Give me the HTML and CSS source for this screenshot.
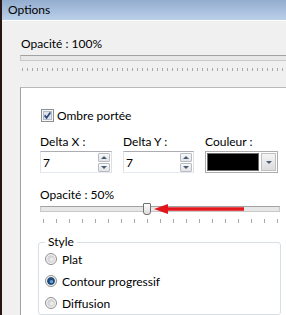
FILE: index.html
```html
<!DOCTYPE html>
<html lang="fr">

<head>
    <meta charset="UTF-8">
    <title>Options</title>
    <link rel="stylesheet" href="styles.css">
</head>

<body>
    <div class="window">
        <div class="titlebar">Options</div>

        <div class="content">
            <!-- Global opacity -->
            <div class="global-opacity">
                <div class="label">Opacité : 100%</div>
                <div class="track track-wide"></div>
                <div class="ticks-dense"></div>
            </div>

            <!-- Drop shadow panel -->
            <div class="panel">
                <label class="check-row">
                    <span class="checkbox">
                        <svg width="13" height="13" viewBox="0 0 13 13">
                            <rect x="0.5" y="0.5" width="12" height="12" fill="#f4f6f8" stroke="#8e8f8f"/>
                            <rect x="2.5" y="2.5" width="8" height="8" fill="#dce3ec" stroke="#b3bdc9"/>
                            <path d="M3.6 6.4 L5.6 8.8 L9.4 3.6" fill="none" stroke="#31477a" stroke-width="1.7"/>
                        </svg>
                    </span>
                    Ombre portée
                </label>

                <div class="fields">
                    <div class="field">
                        <div class="label">Delta X :</div>
                        <div class="spin-input">
                            <span class="value">7</span>
                            <div class="spinner">
                                <span class="spin-btn"><span class="arrow-up"></span></span>
                                <span class="spin-btn"><span class="arrow-down"></span></span>
                            </div>
                        </div>
                    </div>
                    <div class="field">
                        <div class="label">Delta Y :</div>
                        <div class="spin-input">
                            <span class="value">7</span>
                            <div class="spinner">
                                <span class="spin-btn"><span class="arrow-up"></span></span>
                                <span class="spin-btn"><span class="arrow-down"></span></span>
                            </div>
                        </div>
                    </div>
                    <div class="field">
                        <div class="label">Couleur :</div>
                        <div class="color-picker">
                            <span class="swatch"></span>
                            <span class="drop-btn"><span class="arrow-down"></span></span>
                        </div>
                    </div>
                </div>

                <div class="shadow-opacity">
                    <div class="label">Opacité : 50%</div>
                    <div class="slider">
                        <div class="track"></div>
                        <span class="thumb"></span>
                        <!-- red pointer -->
                        <svg class="pointer" width="92" height="12" viewBox="0 0 92 12">
                            <line x1="11" y1="6" x2="90" y2="6" stroke="#e3161c" stroke-width="3.5"/>
                            <polygon points="0,6 14,1 14,11" fill="#e3161c"/>
                        </svg>
                    </div>
                    <div class="ticks">
                        <span></span><span></span><span></span><span></span><span></span>
                        <span></span><span></span><span></span><span></span><span></span>
                        <span></span><span></span><span></span><span></span><span></span>
                        <span></span><span></span><span></span><span></span>
                    </div>
                </div>

                <fieldset class="style-group">
                    <legend>Style</legend>
                    <div class="radios">
                        <label class="radio-row">
                            <svg width="12" height="12" viewBox="0 0 12 12">
                                <circle cx="6" cy="6" r="5.5" fill="#f3f3f3" stroke="#8e8f8f"/>
                                <circle cx="6" cy="6" r="3.8" fill="#d4d4d4"/>
                                <circle cx="6.6" cy="6.6" r="2" fill="#ececec"/>
                            </svg>
                            Plat
                        </label>
                        <label class="radio-row">
                            <svg width="12" height="12" viewBox="0 0 12 12">
                                <circle cx="6" cy="6" r="5.5" fill="#f3f3f3" stroke="#8e8f8f"/>
                                <circle cx="6" cy="6" r="3.5" fill="#1f4f86" stroke="#173b66" stroke-width="0.8"/>
                                <circle cx="6.5" cy="6.6" r="1.6" fill="#6ea7dc"/>
                            </svg>
                            Contour progressif
                        </label>
                        <label class="radio-row">
                            <svg width="12" height="12" viewBox="0 0 12 12">
                                <circle cx="6" cy="6" r="5.5" fill="#f3f3f3" stroke="#8e8f8f"/>
                                <circle cx="6" cy="6" r="3.8" fill="#d4d4d4"/>
                                <circle cx="6.6" cy="6.6" r="2" fill="#ececec"/>
                            </svg>
                            Diffusion
                        </label>
                    </div>
                </fieldset>
            </div>
        </div>
    </div>
</body>

</html>
```

FILE: styles.css
```css
/* Reset */

* {
    margin: 0;
    padding: 0;
    box-sizing: border-box;
}

body {
    font-family: Lato, 'Segoe UI', sans-serif;
    font-size: 12px;
    color: #000;
    background-color: #f0f0f0;
    width: 286px;
    height: 315px;
    overflow: hidden;
}
/* Window frame */

.window {
    border-left: 2px solid #2a1515;
    min-height: 315px;
    background-color: #f0f0f0;
}

.titlebar {
    height: 21px;
    padding: 2px 0 0 6px;
    line-height: 16px;
    background: linear-gradient(#93adcf, #bacfe9);
    border-bottom: 1px solid #fff;
}

.content {
    padding: 15px 0 0 18px;
}

.label {
    line-height: 16px;
}

.global-opacity .label {
    padding-left: 1px;
}
/* Sliders */

.track {
    height: 6px;
    background-color: #e7e7e7;
    border: 1px solid #c8c8c8;
    border-top-color: #a2a2a2;
}

.track-wide {
    margin-top: 3px;
    border-right: none;
}

.ticks-dense {
    margin: 7px 0 0 2px;
    height: 3px;
    background: repeating-linear-gradient(90deg, #a8a8a8 0 1px, transparent 1px 5px);
}
/* White panel */

.panel {
    margin-top: 16px;
    min-height: 240px;
    background-color: #fff;
    border-top: 1px solid #b9b9b9;
    border-left: 1px solid #a0a0a0;
    padding: 21px 0 0 19px;
}

.check-row {
    display: flex;
    align-items: center;
    gap: 3px;
    height: 13px;
}

.checkbox {
    display: flex;
    margin-left: 1px;
}

.fields {
    display: grid;
    grid-template-columns: 72px 71px 73px;
    column-gap: 11px;
    margin-top: 12px;
}

.spin-input {
    display: flex;
    align-items: center;
    justify-content: space-between;
    height: 22px;
    margin-top: 1px;
    padding: 0 1px 0 2px;
    border: 1px solid;
    border-color: #abadb3 #dbdfe6 #e3e9ef #e2e3ea;
}

.spinner {
    display: flex;
    flex-direction: column;
    gap: 1px;
}

.spin-btn {
    display: flex;
    align-items: center;
    justify-content: center;
    width: 12px;
    height: 9px;
    border: 1px solid #b9bcc2;
    border-radius: 1px;
    background: linear-gradient(#f8f8f8, #e2e3e6);
}

.arrow-up,
.arrow-down {
    width: 0;
    height: 0;
    border-left: 3px solid transparent;
    border-right: 3px solid transparent;
}

.arrow-up {
    border-bottom: 3px solid #4c5b75;
}

.arrow-down {
    border-top: 3px solid #4c5b75;
}

.color-picker {
    display: flex;
    gap: 2px;
    height: 22px;
    margin-top: 1px;
    padding: 1px;
    border: 1px solid #acacac;
}

.swatch {
    flex: 1;
    background-color: #000;
    border: 1px solid #6b6b6b;
}

.drop-btn {
    display: flex;
    align-items: center;
    justify-content: center;
    width: 15px;
    border: 1px solid #c0c0c0;
    background: linear-gradient(#f4f4f4, #dcdcdc);
}
/* Shadow opacity */

.shadow-opacity {
    margin-top: 14px;
}

.slider {
    position: relative;
    width: 240px;
    height: 13px;
}

.slider .track {
    position: relative;
    top: 3px;
}

.thumb {
    position: absolute;
    left: 103px;
    top: 0;
    width: 8px;
    height: 12px;
    border: 1px solid #707070;
    border-radius: 1px 1px 3px 3px;
    background: linear-gradient(#fdfdfd, #dcdcdc);
}

.pointer {
    position: absolute;
    left: 114px;
    top: 0;
}

.ticks {
    display: flex;
    justify-content: space-between;
    width: 240px;
    height: 4px;
    margin-top: 3px;
    padding: 0 2px 0 3px;
}

.ticks span {
    width: 1px;
    background-color: #aaa;
}
/* Style group */

.style-group {
    width: 243px;
    margin: 12px 0 0 -2px;
    padding: 0 0 0 6px;
    border: 1px solid #d5dfe5;
    border-radius: 3px;
}

.style-group legend {
    padding: 0 3px;
    line-height: 14px;
}

.radios {
    margin-top: -1px;
}

.radio-row {
    display: flex;
    align-items: center;
    gap: 5px;
    height: 22px;
}
```
